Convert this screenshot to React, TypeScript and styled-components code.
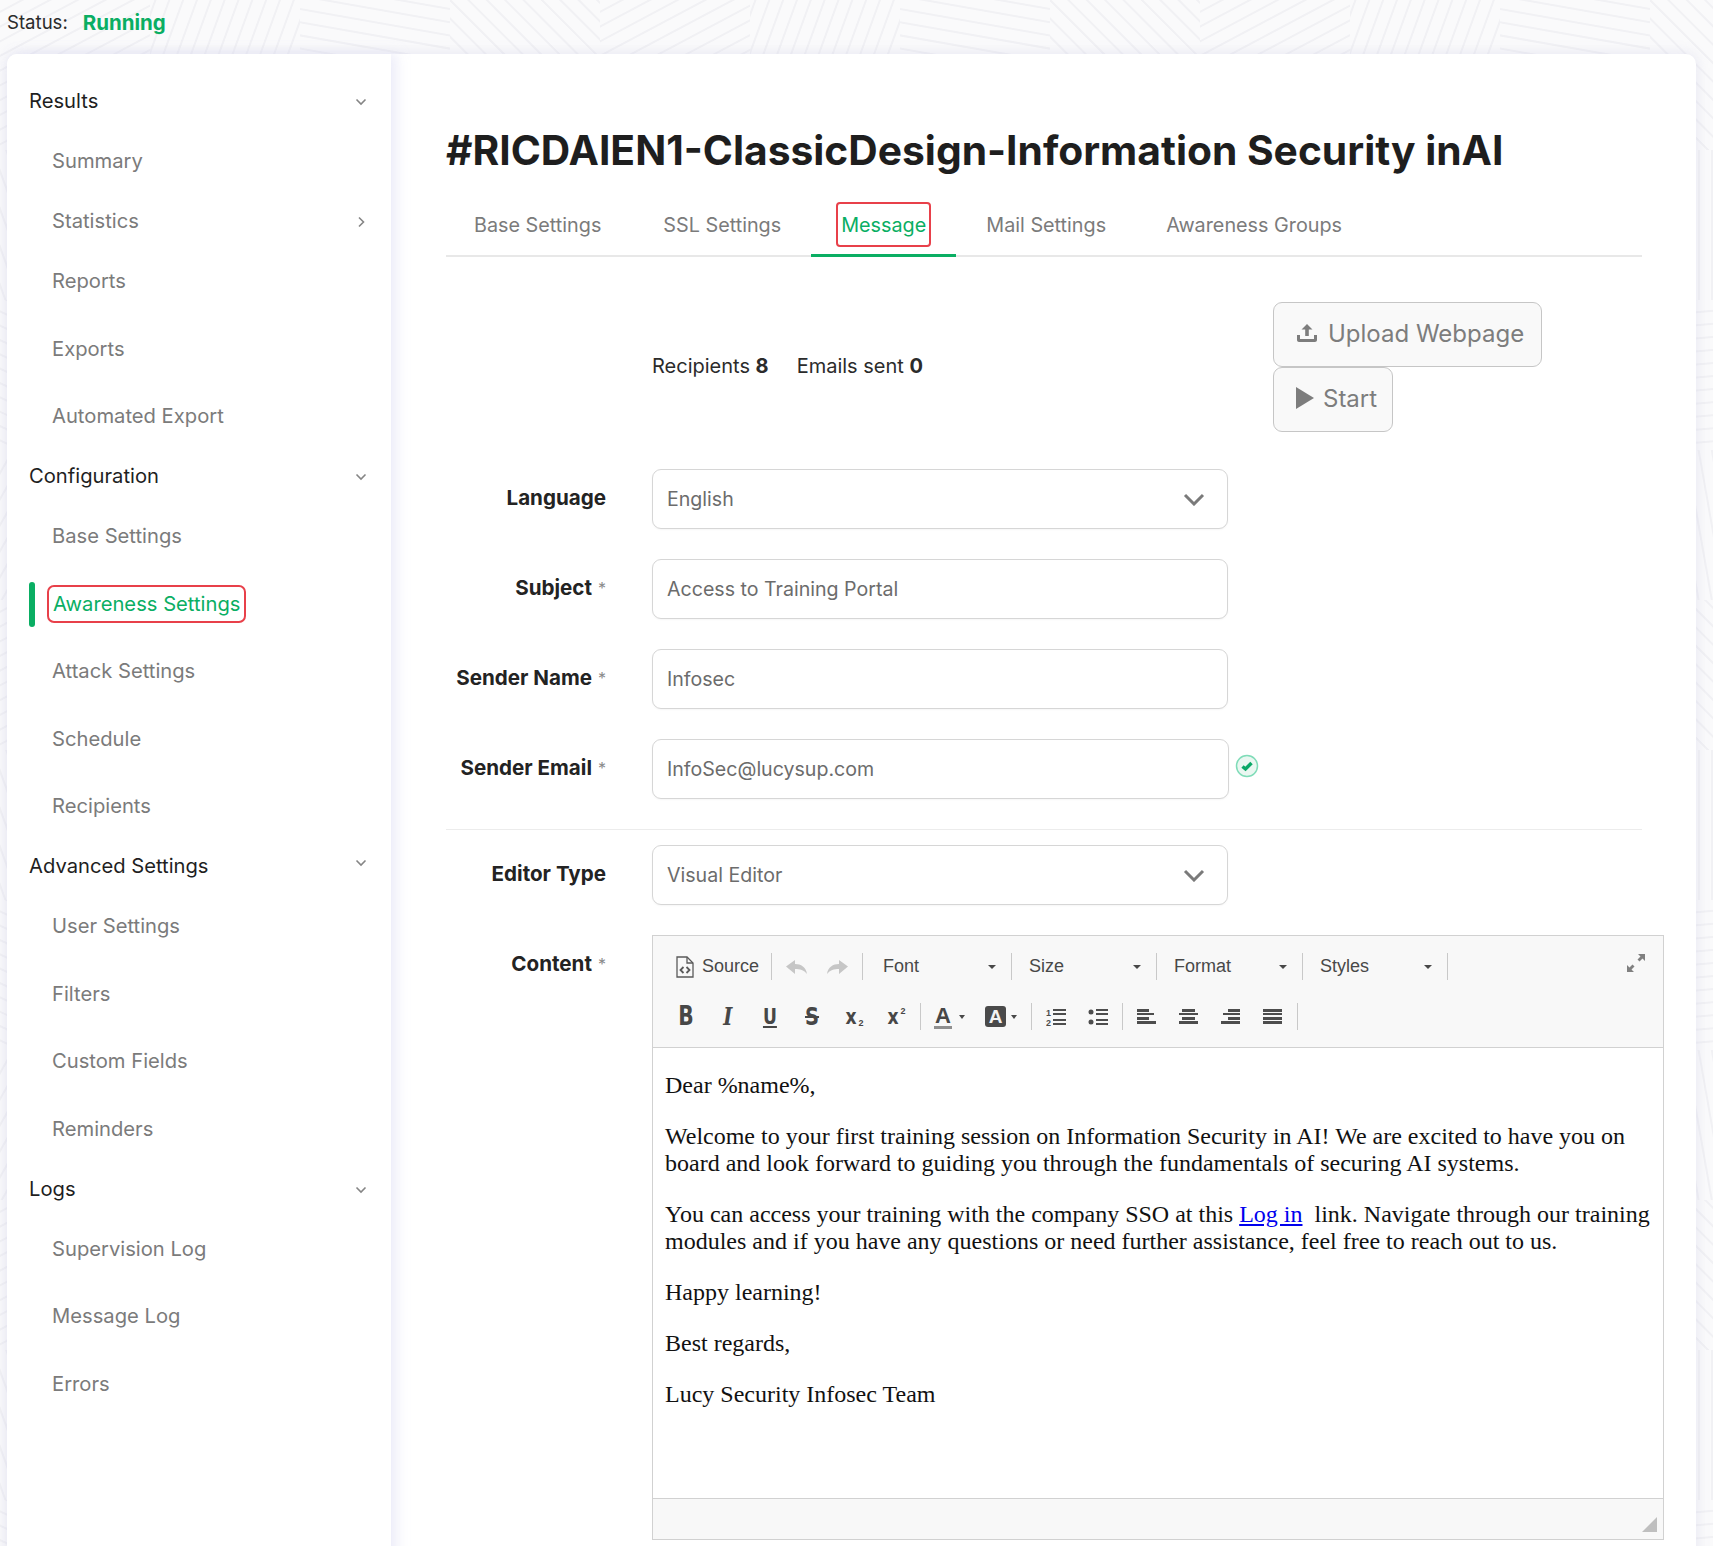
import React from 'react';
import styled, {createGlobalStyle} from 'styled-components';

const cell = 150;
const angles = [62, 20, 100, 135, 160, 75, 40, 0, 115, 15, 150, 85, 30, 125, 60, 170];

// woven line pattern behind the cards
const buildPattern = () => {
    const patches = angles.map((angle, i) => {
        const x = (i % 4) * cell;
        const y = Math.floor(i / 4) * cell;
        const lines = Array.from({length: 21}, (_, n) => {
            const p = (n - 10) * 13;
            return `<line x1='${p}' y1='-130' x2='${p}' y2='130'/>`;
        }).join('');
        return `<svg x='${x}' y='${y}' width='${cell}' height='${cell}'><g transform='translate(75 75) rotate(${angle})'>${lines}</g></svg>`;
    }).join('');
    const svg = `<svg xmlns='http://www.w3.org/2000/svg' width='${cell * 4}' height='${cell * 4}'><g stroke='#f1f1f4' stroke-width='2'>${patches}</g></svg>`;
    return `url("data:image/svg+xml,${encodeURIComponent(svg)}")`;
};

const GlobalStyle = createGlobalStyle`
    html, body {
        margin: 0;
        height: 100%;
        overflow: hidden;
        font-family: Inter, "Noto Sans", sans-serif;
        background-color: #fafafb;
        background-image: ${buildPattern()};
    }
    #root {
        height: 100%;
    }
`;

const Page = styled.div`
    height: 1546px;
    overflow: hidden;
    padding: 0 17px 0 7px;
    box-sizing: border-box;
`;

const StatusBar = styled.div`
    height: 54px;
    padding-bottom: 10px;
    box-sizing: border-box;
    display: flex;
    align-items: center;
    gap: 15px;
    color: #2b2b2b;
`;

const StatusKey = styled.span`
    font-size: 18.600px;
`;

const StatusValue = styled.span`
    font-size: 20.500px;
    color: #0aae63;
    font-weight: 700;
`;

const Layout = styled.div`
    display: flex;
    height: 1560px;
    border-radius: 10px;
    box-shadow: 0 0 14px rgba(205, 205, 230, 0.45);
    background: #fff;
`;

const Sidebar = styled.nav`
    width: 384px;
    flex: none;
    padding-top: 34px;
    box-sizing: border-box;
    background: #fff;
    border-radius: 10px 0 0 10px;
    box-shadow: 6px 0 12px rgba(222, 222, 244, 0.55);
    position: relative;
`;

const NavRow = styled.div<{$tall?: boolean; $head?: boolean}>`
    height: ${(p) => (p.$tall ? 67.5 : 60)}px;
    padding-left: ${(p) => (p.$head ? 22 : 45)}px;
    padding-right: 24px;
    box-sizing: border-box;
    display: flex;
    justify-content: space-between;
    align-items: flex-start;
    font-size: 20.200px;
    line-height: 26px;
    color: ${(p) => (p.$head ? '#1f1f1f' : '#7b7b7b')};
    position: relative;
`;

const ActiveBar = styled.span`
    position: absolute;
    left: 22px;
    top: -9px;
    width: 6px;
    height: 45px;
    border-radius: 3px;
    background: #0aae63;
`;

const ActiveLabel = styled.span`
    color: #0aae63;
    border-radius: 1px;
    margin-left: 1px;
    outline: 2px solid #e8404a;
    outline-offset: 4px;
`;

const Chevron = styled.svg<{$up?: number}>`
    width: 12px;
    height: 12px;
    margin-top: ${(p) => 8 - (p.$up ?? 0)}px;
    fill: none;
    stroke: #858585;
    stroke-width: 1.6;
`;

const Main = styled.main`
    flex: 1;
    min-width: 0;
    padding: 72px 54px 0 55px;
`;

const Title = styled.h1`
    margin: 0;
    font-size: 40.750px;
    line-height: 50px;
    font-weight: 700;
    color: #1e1e1e;
    white-space: nowrap;
`;

const Tabs = styled.div`
    margin-top: 24px;
    display: flex;
    height: 57px;
    box-sizing: border-box;
    border-bottom: 2px solid #e8e8e8;
`;

const Tab = styled.div<{$active?: boolean}>`
    height: 57px;
    box-sizing: border-box;
    padding: 12px 30px 0;
    font-size: 19.800px;
    line-height: 26px;
    color: ${(p) => (p.$active ? '#0aae63' : '#7b7b7b')};
    border-bottom: ${(p) => (p.$active ? '3px solid #0aae63' : 'none')};

    &:first-child {
        margin-left: -2px;
        padding-right: 32px;
    }
`;

const TabLabel = styled.span`
    display: inline-block;
    margin: -10px -5px -8px;
    padding: 8px 3px 7px;
    border: 2px solid #e8404a;
    border-radius: 4px;
`;

const FormRows = styled.div`
    margin-top: 45px;
`;

const StatsRow = styled.div`
    display: flex;
    margin-left: 206px;
    margin-bottom: 37px;
`;

const Stats = styled.div`
    width: 621px;
    display: flex;
    align-items: center;
    gap: 28px;
    font-size: 20px;
    color: #2b2b2b;
    padding-bottom: 2px;
    box-sizing: border-box;
`;

const Buttons = styled.div`
    display: flex;
    flex-direction: column;
    align-items: flex-start;
`;

const ActionButton = styled.div<{$pad: string; $gap: number}>`
    height: 65px;
    box-sizing: border-box;
    display: flex;
    align-items: center;
    gap: ${(p) => p.$gap}px;
    padding: ${(p) => p.$pad};
    font-size: 24px;
    color: #7d7d7d;
    background: #f9f9f9;
    border: 1px solid #c6c6c6;
    border-radius: 9px;
`;

const FormRow = styled.div<{$gap?: number}>`
    display: grid;
    grid-template-columns: 160px minmax(0, 1fr);
    column-gap: 46px;
    margin-bottom: ${(p) => p.$gap ?? 30}px;
`;

const Label = styled.div`
    height: 57px;
    display: flex;
    align-items: center;
    justify-content: flex-end;
    gap: 6px;
    font-size: 20.600px;
    font-weight: 700;
    color: #232323;
    white-space: nowrap;
`;

const Star = styled.span`
    font-size: 16px;
    font-weight: 400;
    color: #8a8a8a;
`;

const FieldLine = styled.div`
    display: flex;
    align-items: center;
    gap: 6px;
`;

const Field = styled.div<{$wide?: boolean}>`
    width: ${(p) => (p.$wide ? 577 : 576)}px;
    height: 60px;
    box-sizing: border-box;
    padding: 0 22px 0 14px;
    display: flex;
    align-items: center;
    justify-content: space-between;
    font-size: 19.600px;
    color: #6c6c6c;
    background: #fff;
    border: 1px solid #d6d6d6;
    border-radius: 9px;
    box-shadow: 0 1px 2px rgba(0, 0, 0, 0.04);
`;

const CheckMark = styled.svg`
    width: 24px;
    height: 24px;
    margin-bottom: 6px;
`;

const Divider = styled.div`
    height: 1px;
    background: #ececec;
    margin: 0 0 15px;
`;

const Editor = styled.div`
    margin-right: -22px;
    height: 605px;
    box-sizing: border-box;
    display: flex;
    flex-direction: column;
    border: 1px solid #d1d1d1;
    background: #fff;
`;

const Toolbar = styled.div`
    height: 112px;
    flex: none;
    box-sizing: border-box;
    padding-top: 17px;
    display: flex;
    flex-direction: column;
    gap: 23px;
    background: #f8f8f8;
    border-bottom: 1px solid #d1d1d1;
    font-family: "Liberation Sans", Arial, sans-serif;
    color: #484848;
`;

const ToolRow = styled.div<{$left: number}>`
    height: 27px;
    display: flex;
    align-items: center;
    padding-left: ${(p) => p.$left}px;
    padding-right: 18px;
`;

const Sep = styled.span<{$space?: number}>`
    width: 1px;
    height: 27px;
    flex: none;
    background: #c9c9c9;
    margin: 0 ${(p) => p.$space ?? 0}px;
`;

const SourceButton = styled.div`
    width: 95px;
    display: flex;
    align-items: center;
    gap: 8px;
    font-size: 18px;
`;

const ToolButton = styled.div<{$w?: number; $before?: number; $after?: number}>`
    width: ${(p) => p.$w ?? 42}px;
    height: 27px;
    flex: none;
    display: flex;
    align-items: center;
    justify-content: center;
    position: relative;
    margin-left: ${(p) => p.$before ?? 0}px;
    margin-right: ${(p) => p.$after ?? 0}px;
`;

const Combo = styled.div<{$w: number; $left: number}>`
    width: ${(p) => p.$w}px;
    padding: 0 15px 0 ${(p) => p.$left}px;
    box-sizing: border-box;
    display: flex;
    align-items: center;
    justify-content: space-between;
    font-size: 18px;
`;

const Caret = styled.span`
    width: 0;
    height: 0;
    border-left: 4px solid transparent;
    border-right: 4px solid transparent;
    border-top: 4px solid #484848;
`;

const SmallCaret = styled(Caret)`
    position: absolute;
    right: 11px;
    top: 12px;
    border-left-width: 3.5px;
    border-right-width: 3.5px;
`;

const FullScreen = styled.svg`
    width: 18px;
    height: 18px;
    margin-left: auto;
    align-self: flex-start;
    margin-top: 1px;
    fill: #808080;
`;

const GlyphLetter = styled.span<{$size?: number; $serif?: boolean}>`
    font-family: ${(p) => (p.$serif ? '"DejaVu Serif", serif' : '"DejaVu Sans", sans-serif')};
    font-size: ${(p) => p.$size ?? 24}px;
    font-weight: 700;
    line-height: 27px;
    color: #474747;
    display: inline-block;
    transform: scaleX(0.78);
`;

const Underlined = styled(GlyphLetter)`
    text-decoration: underline;
    text-decoration-thickness: 2px;
    text-underline-offset: 2px;
`;

const Struck = styled(GlyphLetter)`
    padding: 0 4px;
    text-decoration: line-through;
    text-decoration-thickness: 2px;
`;

const Script = styled.span<{$up?: boolean}>`
    font-size: 9px;
    font-weight: 700;
    position: relative;
    top: ${(p) => (p.$up ? -6 : 6)}px;
    color: #474747;
`;

const ColorLetter = styled.span`
    font-size: 22px;
    font-weight: 700;
    line-height: 21px;
    color: #474747;
    border-bottom: 3px solid #8f8f8f;
    padding: 0 1px;
    margin-right: 14px;
`;

const BackLetter = styled.span`
    width: 21px;
    height: 21px;
    border-radius: 3px;
    background: #4a4a4a;
    color: #f2f2f2;
    font-size: 19px;
    font-weight: 700;
    line-height: 21px;
    text-align: center;
    margin-right: 13px;
`;

const Body = styled.div`
    flex: 1;
    padding: 24px 0 0 12px;
    font-family: "Liberation Serif", "Times New Roman", serif;
    font-size: 24px;
    line-height: 27px;
    color: #111;
`;

const Para = styled.p`
    margin: 0 0 24px;
    white-space: nowrap;
`;

const BodyLink = styled.a`
    color: #0000ee;
    text-decoration: underline;
`;

const EditorFooter = styled.div`
    height: 41px;
    flex: none;
    box-sizing: border-box;
    display: flex;
    justify-content: flex-end;
    align-items: flex-end;
    padding: 0 6px 7px 0;
    background: #f8f8f8;
    border-top: 1px solid #d1d1d1;
`;

const Grip = styled.svg`
    width: 15px;
    height: 15px;
    fill: #bfbfbf;
`;

type NavItem = {
    label: string;
    head?: boolean;
    tall?: boolean;
    active?: boolean;
    arrow?: 'down' | 'right';
    up?: number;
};

const navItems: NavItem[] = [
    {label: 'Results', head: true, arrow: 'down'},
    {label: 'Summary'},
    {label: 'Statistics', arrow: 'right'},
    {label: 'Reports', tall: true},
    {label: 'Exports', tall: true},
    {label: 'Automated Export'},
    {label: 'Configuration', head: true, arrow: 'down'},
    {label: 'Base Settings', tall: true},
    {label: 'Awareness Settings', tall: true, active: true},
    {label: 'Attack Settings', tall: true},
    {label: 'Schedule', tall: true},
    {label: 'Recipients'},
    {label: 'Advanced Settings', head: true, arrow: 'down', up: 4},
    {label: 'User Settings', tall: true},
    {label: 'Filters', tall: true},
    {label: 'Custom Fields', tall: true},
    {label: 'Reminders'},
    {label: 'Logs', head: true, arrow: 'down'},
    {label: 'Supervision Log', tall: true},
    {label: 'Message Log', tall: true},
    {label: 'Errors'},
];

const tabs = ['Base Settings', 'SSL Settings', 'Message', 'Mail Settings', 'Awareness Groups'];

const Select = ({value}: {value: string}) => (
    <Field>
        {value}
        <svg
            width='22'
            height='13'
            viewBox='0 0 22 13'
            fill='none'
            stroke='#7a7a7a'
            strokeWidth='3'
        >
            <path d='M2 2l9 9 9-9'/>
        </svg>
    </Field>
);

const Lines = ({bars}: {bars: number[][]}) => (
    <svg
        width='20'
        height='18'
        viewBox='0 0 20 18'
        fill='#4d4d4d'
    >
        {bars.map(([x, y, w, h]) => (
            <rect
                key={`${x}-${y}`}
                x={x}
                y={y}
                width={w}
                height={h}
            />
        ))}
    </svg>
);

const ListBars = ({x}: {x: number}) => (
    <>
        {[2, 6, 12, 16].map((y) => (
            <rect
                key={y}
                x={x}
                y={y}
                width={20 - x}
                height='2'
            />
        ))}
    </>
);

const alignLeft = [[0, 1, 12, 3], [0, 5, 17, 2], [0, 9, 12, 3], [0, 13, 19, 3]];
const alignCenter = [[3, 1, 13, 3], [0, 5, 19, 2], [3, 9, 13, 3], [0, 13, 19, 3]];
const alignRight = [[7, 1, 12, 3], [2, 5, 17, 2], [7, 9, 12, 3], [0, 13, 19, 3]];
const justify = [[0, 1, 19, 3], [0, 5, 19, 2], [0, 9, 19, 3], [0, 13, 19, 3]];

export default function App() {
    return (
        <Page>
            <GlobalStyle/>
            <StatusBar>
                <StatusKey>{'Status:'}</StatusKey>
                <StatusValue>{'Running'}</StatusValue>
            </StatusBar>
            <Layout>
                <Sidebar>
                    {navItems.map((item) => (
                        <NavRow
                            key={item.label}
                            $head={item.head}
                            $tall={item.tall}
                        >
                            {item.active ? (
                                <>
                                    <ActiveBar/>
                                    <ActiveLabel>{item.label}</ActiveLabel>
                                </>
                            ) : item.label}
                            {item.arrow && (
                                <Chevron
                                    viewBox='0 0 12 12'
                                    $up={item.up}
                                >
                                    <path d={item.arrow === 'down' ? 'M1.5 3.5L6 8l4.5-4.5' : 'M4 1.5L8.5 6 4 10.5'}/>
                                </Chevron>
                            )}
                        </NavRow>
                    ))}
                </Sidebar>
                <Main>
                    <Title>{'#RICDAIEN1-ClassicDesign-Information Security inAI'}</Title>
                    <Tabs>
                        {tabs.map((tab) => (
                            <Tab
                                key={tab}
                                $active={tab === 'Message'}
                            >
                                {tab === 'Message' ? <TabLabel>{tab}</TabLabel> : tab}
                            </Tab>
                        ))}
                    </Tabs>
                    <FormRows>
                        <StatsRow>
                            <Stats>
                                <span>{'Recipients '}<b>{'8'}</b></span>
                                <span>{'Emails sent '}<b>{'0'}</b></span>
                            </Stats>
                            <Buttons>
                                <ActionButton
                                    $pad='0 17px 3px 23px'
                                    $gap={11}
                                >
                                    <svg
                                        width='20'
                                        height='18'
                                        viewBox='0 0 20 18'
                                        fill='#7d7d7d'
                                    >
                                        <path d='M10 0l5.5 5.5h-3.7V12H8.200V5.500H4.500zM0 11h3v4h14v-4h3v5c0 1.100-.9 2-2 2H2c-1.100 0-2-.9-2-2z'/>
                                    </svg>
                                    {'Upload Webpage'}
                                </ActionButton>
                                <ActionButton
                                    $pad='0 15px 3px 22px'
                                    $gap={9}
                                >
                                    <svg
                                        width='18'
                                        height='22'
                                        viewBox='0 0 18 22'
                                        fill='#7d7d7d'
                                    >
                                        <path d='M0 0l18 11L0 22z'/>
                                    </svg>
                                    {'Start'}
                                </ActionButton>
                            </Buttons>
                        </StatsRow>
                        <FormRow>
                            <Label>{'Language'}</Label>
                            <Select value='English'/>
                        </FormRow>
                        <FormRow>
                            <Label>{'Subject'}<Star>{'*'}</Star></Label>
                            <Field>{'Access to Training Portal'}</Field>
                        </FormRow>
                        <FormRow>
                            <Label>{'Sender Name'}<Star>{'*'}</Star></Label>
                            <Field>{'Infosec'}</Field>
                        </FormRow>
                        <FormRow>
                            <Label>{'Sender Email'}<Star>{'*'}</Star></Label>
                            <FieldLine>
                                <Field $wide={true}>{'InfoSec@lucysup.com'}</Field>
                                <CheckMark viewBox='0 0 24 24'>
                                    <circle
                                        cx='12'
                                        cy='12'
                                        r='10.500'
                                        fill='#eaf7f1'
                                        stroke='#7fdcb8'
                                        strokeWidth='1.500'
                                    />
                                    <path
                                        d='M7.500 12.500l3 2.500 6-6'
                                        fill='none'
                                        stroke='#0aa867'
                                        strokeWidth='3.500'
                                    />
                                </CheckMark>
                            </FieldLine>
                        </FormRow>
                        <Divider/>
                        <FormRow>
                            <Label>{'Editor Type'}</Label>
                            <Select value='Visual Editor'/>
                        </FormRow>
                        <FormRow>
                            <Label>{'Content'}<Star>{'*'}</Star></Label>
                            <Editor>
                                <Toolbar>
                                    <ToolRow $left={23}>
                                        <SourceButton>
                                            <svg
                                                width='18'
                                                height='22'
                                                viewBox='0 0 18 22'
                                                fill='none'
                                                stroke='#5a5a5a'
                                                strokeWidth='1.300'
                                            >
                                                <path d='M1 1h10l6 6v14H1z'/>
                                                <path d='M11 1v6h6'/>
                                                <path
                                                    d='M7.500 11l-3 3 3 3M10.500 11l3 3-3 3'
                                                    strokeWidth='1.800'
                                                />
                                            </svg>
                                            {'Source'}
                                        </SourceButton>
                                        <Sep/>
                                        <ToolButton
                                            $w={41}
                                            $before={4}
                                        >
                                            <svg
                                                width='21'
                                                height='14'
                                                viewBox='0 0 21 14'
                                                fill='#c6c6c6'
                                            >
                                                <path d='M0 6.500L9 0v4c6 0 11 3 12 10-3-4-7-5-12-5v5z'/>
                                            </svg>
                                        </ToolButton>
                                        <ToolButton
                                            $w={41}
                                            $after={4}
                                        >
                                            <svg
                                                width='21'
                                                height='14'
                                                viewBox='0 0 21 14'
                                                fill='#c6c6c6'
                                            >
                                                <path d='M21 6.500L12 0v4C6 4 1 7 0 14c3-4 7-5 12-5v5z'/>
                                            </svg>
                                        </ToolButton>
                                        <Sep/>
                                        <Combo
                                            $w={148}
                                            $left={20}
                                        >
                                            {'Font'}<Caret/>
                                        </Combo>
                                        <Sep/>
                                        <Combo
                                            $w={144}
                                            $left={17}
                                        >
                                            {'Size'}<Caret/>
                                        </Combo>
                                        <Sep/>
                                        <Combo
                                            $w={145}
                                            $left={17}
                                        >
                                            {'Format'}<Caret/>
                                        </Combo>
                                        <Sep/>
                                        <Combo
                                            $w={144}
                                            $left={17}
                                        >
                                            {'Styles'}<Caret/>
                                        </Combo>
                                        <Sep/>
                                        <FullScreen viewBox='0 0 18 18'>
                                            <path d='M11 0h7v7l-2.500-2.500-3 3-2-2 3-3zM7 18H0v-7l2.500 2.500 3-3 2 2-3 3z'/>
                                        </FullScreen>
                                    </ToolRow>
                                    <ToolRow $left={12}>
                                        <ToolButton><GlyphLetter $size={26}>{'B'}</GlyphLetter></ToolButton>
                                        <ToolButton><GlyphLetter $size={25} $serif={true}><i>{'I'}</i></GlyphLetter></ToolButton>
                                        <ToolButton><Underlined $size={22}>{'U'}</Underlined></ToolButton>
                                        <ToolButton><Struck $size={25}>{'S'}</Struck></ToolButton>
                                        <ToolButton><GlyphLetter $size={22}>{'x'}</GlyphLetter><Script>{'2'}</Script></ToolButton>
                                        <ToolButton><GlyphLetter $size={22}>{'x'}</GlyphLetter><Script $up={true}>{'2'}</Script></ToolButton>
                                        <Sep $space={3}/>
                                        <ToolButton $w={52}><ColorLetter>{'A'}</ColorLetter><SmallCaret/></ToolButton>
                                        <ToolButton $w={52}><BackLetter>{'A'}</BackLetter><SmallCaret/></ToolButton>
                                        <Sep $space={3}/>
                                        <ToolButton>
                                            <svg
                                                width='20'
                                                height='20'
                                                viewBox='0 0 20 20'
                                                fill='#4d4d4d'
                                            >
                                                <text
                                                    x='0'
                                                    y='9'
                                                    fontSize='9'
                                                    fontWeight='700'
                                                >
                                                    {'1'}
                                                </text>
                                                <text
                                                    x='0'
                                                    y='19'
                                                    fontSize='9'
                                                    fontWeight='700'
                                                >
                                                    {'2'}
                                                </text>
                                                <ListBars x={7}/>
                                            </svg>
                                        </ToolButton>
                                        <ToolButton>
                                            <svg
                                                width='20'
                                                height='20'
                                                viewBox='0 0 20 20'
                                                fill='#4d4d4d'
                                            >
                                                <circle
                                                    cx='3'
                                                    cy='5'
                                                    r='2.500'
                                                />
                                                <circle
                                                    cx='3'
                                                    cy='15'
                                                    r='2.500'
                                                />
                                                <ListBars x={8}/>
                                            </svg>
                                        </ToolButton>
                                        <Sep $space={3}/>
                                        <ToolButton><Lines bars={alignLeft}/></ToolButton>
                                        <ToolButton><Lines bars={alignCenter}/></ToolButton>
                                        <ToolButton><Lines bars={alignRight}/></ToolButton>
                                        <ToolButton><Lines bars={justify}/></ToolButton>
                                        <Sep $space={3}/>
                                    </ToolRow>
                                </Toolbar>
                                <Body>
                                    <Para>{'Dear %name%,'}</Para>
                                    <Para>
                                        {'Welcome to your first training session on Information Security in AI! We are excited to have you on'}
                                        <br/>
                                        {'board and look forward to guiding you through the fundamentals of securing AI systems.'}
                                    </Para>
                                    <Para>
                                        {'You can access your training with the company SSO at this '}
                                        <BodyLink href='#'>{'Log in'}</BodyLink>
                                        {'\u00a0 link. Navigate through our training'}
                                        <br/>
                                        {'modules and if you have any questions or need further assistance, feel free to reach out to us.'}
                                    </Para>
                                    <Para>{'Happy learning!'}</Para>
                                    <Para>{'Best regards,'}</Para>
                                    <Para>{'Lucy Security Infosec Team'}</Para>
                                </Body>
                                <EditorFooter>
                                    <Grip viewBox='0 0 15 15'>
                                        <path d='M15 0v15H0z'/>
                                    </Grip>
                                </EditorFooter>
                            </Editor>
                        </FormRow>
                    </FormRows>
                </Main>
            </Layout>
        </Page>
    );
}
